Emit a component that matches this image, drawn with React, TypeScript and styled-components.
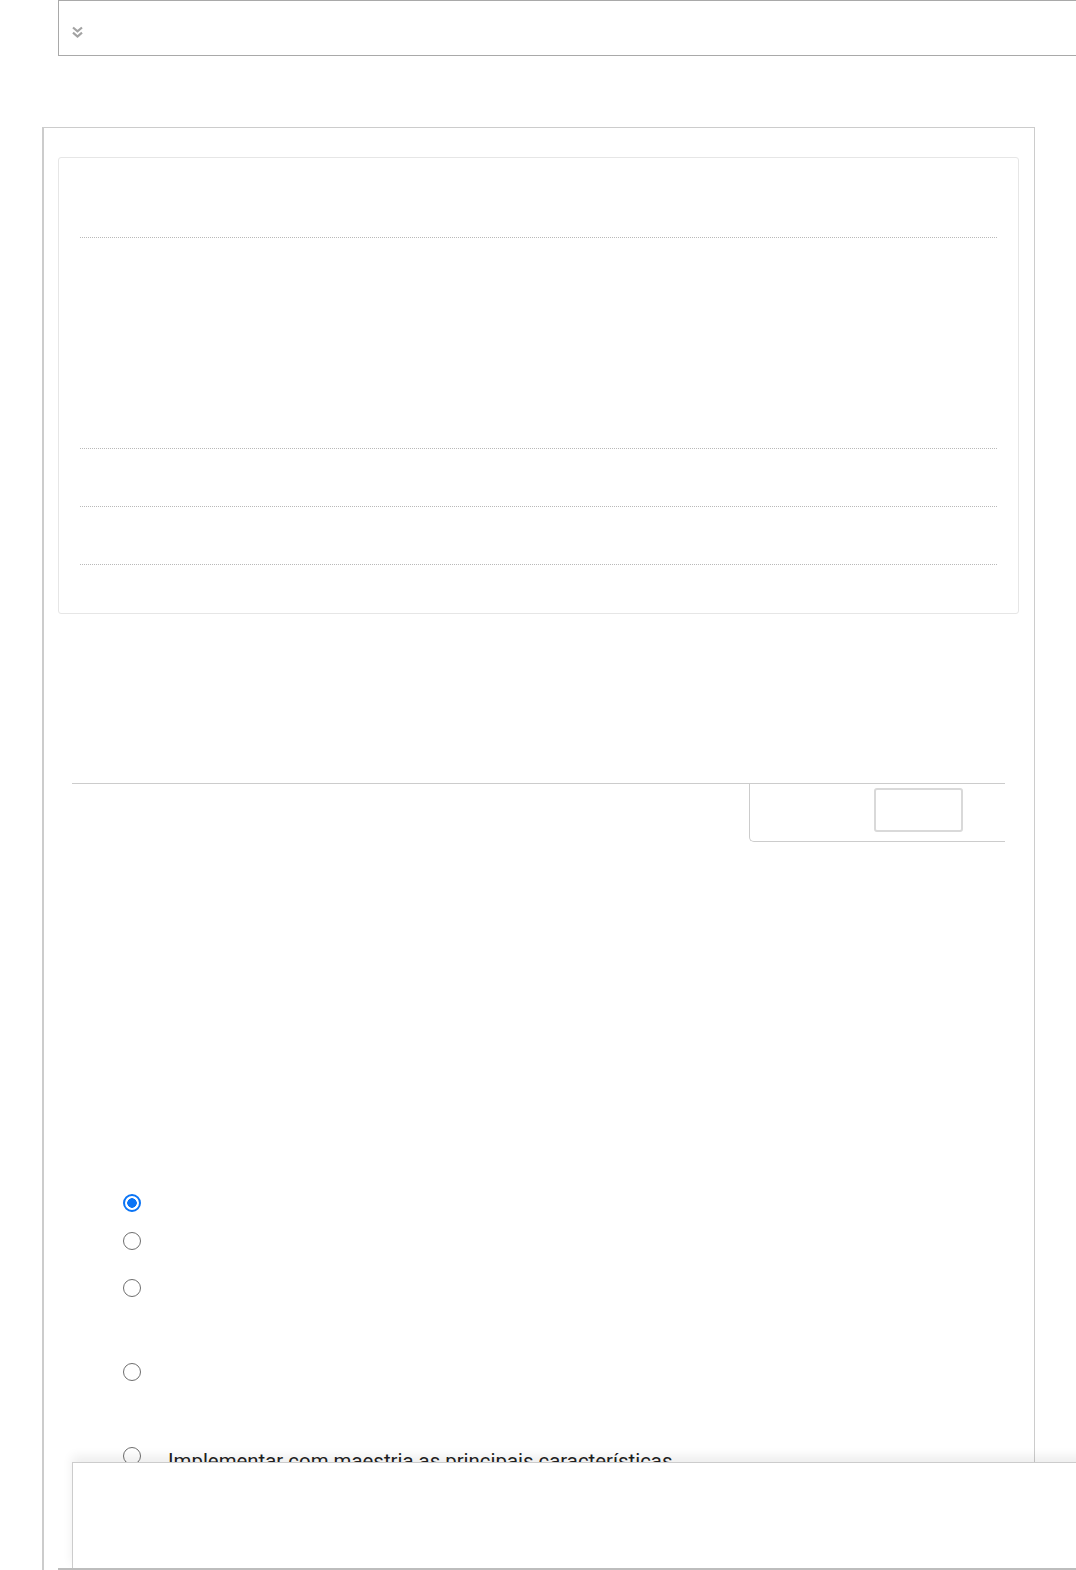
import styled, { createGlobalStyle } from "styled-components";

const Global = createGlobalStyle`
    html, body {
        margin: 0;
        padding: 0;
        background: #ffffff;
        overflow-x: hidden;
        font-family: Roboto, "Liberation Sans", Arial, sans-serif;
        color: #212529;
    }
`;

const TopBar = styled.div`
    margin-left: 58px;
    margin-right: -20px;
    height: 56px;
    border: 1px solid #a9a9a9;
    display: flex;
    align-items: center;
    padding: 8px 0 0 12px;
    box-sizing: border-box;
`;

const Panel = styled.section`
    margin: 71px 0 0 42px;
    width: 993px;
    min-height: 1500px;
    border: 1px solid #cccccc;
    border-left-width: 2px;
    border-bottom: none;
    box-sizing: border-box;
    padding: 29px 15px 0 14px;
`;

const Card = styled.div`
    height: 457px;
    border: 1px solid #e6e6e6;
    border-radius: 3px;
    box-sizing: border-box;
    padding: 0 21px;
    display: flex;
    flex-direction: column;
`;

const Dotted = styled.div<{ $gap: number }>`
    margin-top: ${(p) => p.$gap}px;
    border-top: 1px dotted #b9b9b9;
`;

const TabRow = styled.div`
    margin: 169px 14px 0 14px;
    border-top: 1px solid #cccccc;
    display: flex;
    justify-content: flex-end;
`;

const TabBox = styled.div`
    width: 256px;
    height: 58px;
    border-left: 1px solid #cccccc;
    border-bottom: 1px solid #cccccc;
    border-bottom-left-radius: 5px;
    box-sizing: border-box;
    padding: 4px 0 0 124px;
`;

const TabButton = styled.button`
    width: 89px;
    height: 44px;
    border: 2px solid #d9d9d9;
    border-radius: 3px;
    background: #ffffff;
    padding: 0;
`;

const Options = styled.div`
    margin-top: 352px;
    padding-left: 65px;
    display: flex;
    flex-direction: column;
`;

const OptionRow = styled.label<{ $h: number }>`
    height: ${(p) => p.$h}px;
    display: flex;
    align-items: flex-start;
    gap: 27px;
`;

const Radio = styled.span<{ $on?: boolean }>`
    width: 18px;
    height: 18px;
    flex: none;
    border-radius: 50%;
    box-sizing: border-box;
    border: ${(p) => (p.$on ? "2px solid #0a74f5" : "1.6px solid #6e6e6e")};
    background: ${(p) => (p.$on ? "radial-gradient(circle, #0a74f5 0 4.5px, #ffffff 5px)" : "#ffffff")};
`;

const OptionText = styled.span`
    font-size: 20.4px;
    line-height: 20px;
    margin-top: 4px;
    color: #212121;
`;

const Footer = styled.div`
    position: fixed;
    left: 72px;
    right: -10px;
    bottom: 1px;
    height: 107px;
    background: #ffffff;
    border: 1px solid #cccccc;
    box-sizing: border-box;
    box-shadow: 0 -6px 10px rgba(0, 0, 0, 0.07);
`;

const BottomLine = styled.div`
    position: fixed;
    left: 58px;
    right: 0;
    bottom: 0;
    height: 2px;
    background: #bdbdbd;
`;

function ChevronsDown() {
    return (
        <svg width="13" height="13" viewBox="0 0 13 13" fill="none" stroke="#a3a3a3" strokeWidth="2.2">
            <path d="M2 1.5l4.5 3.8 4.5-3.8M2 6.7l4.5 3.8 4.5-3.8" />
        </svg>
    );
}

const options = [
    { h: 38, on: true, text: "" },
    { h: 47, text: "" },
    { h: 84, text: "" },
    { h: 84, text: "" },
    { h: 60, text: "Implementar com maestria as principais características" },
];

export default function App() {
    return (
        <>
            <Global />
            <TopBar>
                <ChevronsDown />
            </TopBar>
            <Panel>
                <Card>
                    <Dotted $gap={79} />
                    <Dotted $gap={210} />
                    <Dotted $gap={57} />
                    <Dotted $gap={57} />
                </Card>
                <TabRow>
                    <TabBox>
                        <TabButton />
                    </TabBox>
                </TabRow>
                <Options>
                    {options.map((o, i) => (
                        <OptionRow key={i} $h={o.h}>
                            <Radio $on={o.on} />
                            <OptionText>{o.text}</OptionText>
                        </OptionRow>
                    ))}
                </Options>
            </Panel>
            <Footer />
            <BottomLine />
        </>
    );
}
